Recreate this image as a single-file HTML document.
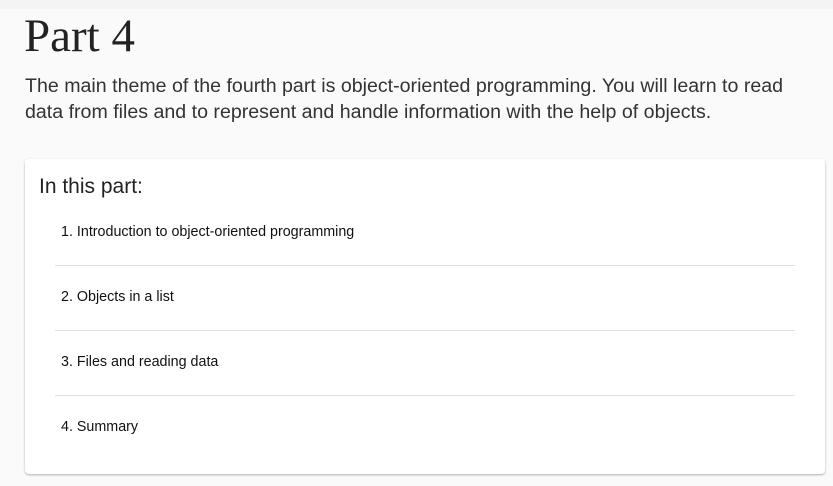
<!DOCTYPE html>
<html><head><style>
body{margin:0;width:833px;height:486px;background:#fafafa;font-family:"Liberation Sans",sans-serif;position:relative;overflow:hidden}
.top{position:absolute;left:0;top:0;width:833px;height:9px;background:#f4f4f4}
h1{position:absolute;left:24px;top:8px;margin:0;font-family:"Liberation Serif",serif;font-weight:normal;font-size:47px;color:#222;line-height:56px}
p{position:absolute;left:25px;top:73px;margin:0;width:775px;font-size:19.6px;line-height:26px;color:#333}
.card{position:absolute;left:25px;top:159px;width:800px;height:315px;background:#fff;border-radius:4px;box-shadow:0 1px 2px rgba(0,0,0,.3)}
.t{position:absolute;left:14px;top:16px;font-size:21px;color:#222}
.it{position:absolute;left:36px;font-size:14.3px;color:#111}
.sep{position:absolute;left:30px;width:740px;height:1px;background:#e0e0e0}
</style></head><body>
<div class="top"></div>
<h1>Part 4</h1>
<p>The main theme of the fourth part is object-oriented programming. You will learn to read data from files and to represent and handle information with the help of objects.</p>
<div class="card">
<div class="t">In this part:</div>
<div class="it" style="top:65px">1. Introduction to object-oriented programming</div>
<div class="sep" style="top:106px"></div>
<div class="it" style="top:130px">2. Objects in a list</div>
<div class="sep" style="top:171px"></div>
<div class="it" style="top:195px">3. Files and reading data</div>
<div class="sep" style="top:236px"></div>
<div class="it" style="top:260px">4. Summary</div>
</div>
</body></html>
